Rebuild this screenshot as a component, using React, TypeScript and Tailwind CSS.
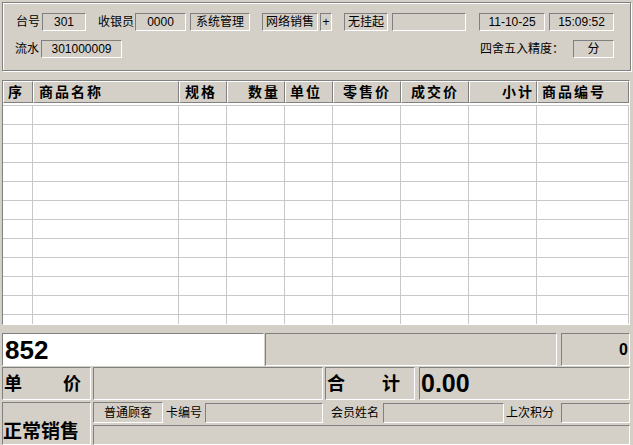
import React from 'react';

const FONT = "font-['Liberation_Sans','Noto_Sans_CJK_SC',sans-serif]";
const sunk = 'border border-t-[#808080] border-l-[#808080] border-b-white border-r-white';
const raised = 'border border-t-white border-l-white border-b-[#808080] border-r-[#808080]';

const COLUMNS = [
  { title: '序', w: 'w-[30px]', align: 'justify-start pl-[4px]' },
  { title: '商品名称', w: 'w-[146px]', align: 'justify-start pl-[5px]' },
  { title: '规格', w: 'w-[48px]', align: 'justify-start pl-[5px]' },
  { title: '数量', w: 'w-[58px]', align: 'justify-end pr-[4px]' },
  { title: '单位', w: 'w-[48px]', align: 'justify-start pl-[4px]' },
  { title: '零售价', w: 'w-[68px]', align: 'justify-center' },
  { title: '成交价', w: 'w-[68px]', align: 'justify-center' },
  { title: '小计', w: 'w-[68px]', align: 'justify-end pr-[2px]' },
  { title: '商品编号', w: 'w-[92px]', align: 'justify-start pl-[4px]' },
];

function Field({ w, children, className = '' }: { w: string; children?: React.ReactNode; className?: string }) {
  return (
    <div className={`${sunk} ${w} h-[18px] flex items-center justify-center text-[12px] leading-none ${className}`}>
      {children}
    </div>
  );
}

function Label({ w, children, className = '' }: { w: string; children: React.ReactNode; className?: string }) {
  return <div className={`${w} whitespace-nowrap text-[12px] leading-none ${className}`}>{children}</div>;
}

export default function App() {
  const rows = Array.from({ length: 12 });

  return (
    <div className={`w-[633px] h-[445px] bg-[#d4d0c8] overflow-hidden text-black ${FONT}`}>
      {/* top info panel */}
      <div className="ml-[2px] mt-[2px] w-[629px] h-[69px] border border-[#808080] shadow-[inset_1px_1px_0_#fff,1px_1px_0_#fff] pt-[10px]">
        <div className="flex items-center h-[18px]">
          <Label w="w-[24px]" className="ml-[13px]">台号</Label>
          <Field w="w-[44px]" className="ml-[2px]">301</Field>
          <Label w="w-[36px]" className="ml-[12px]">收银员</Label>
          <Field w="w-[51px]" className="ml-[1px]">0000</Field>
          <Field w="w-[60px]" className="ml-[4px]">系统管理</Field>
          <Field w="w-[56px]" className="ml-[12px]">网络销售</Field>
          <Field w="w-[12px]" className="ml-[2px]">+</Field>
          <Field w="w-[44px]" className="ml-[12px]">无挂起</Field>
          <Field w="w-[74px]" className="ml-[4px]" />
          <Field w="w-[66px]" className="ml-[13px]">11-10-25</Field>
          <Field w="w-[65px]" className="ml-[4px]">15:09:52</Field>
        </div>
        <div className="flex items-center h-[18px] mt-[9px]">
          <Label w="w-[24px]" className="ml-[12px]">流水</Label>
          <Field w="w-[81px]" className="ml-[2px]">301000009</Field>
          <Label w="w-[84px]" className="ml-[358px]">四舍五入精度：</Label>
          <Field w="w-[41px]" className="ml-[9px]">分</Field>
        </div>
      </div>

      {/* goods table */}
      <div className={`${sunk} ml-[2px] mt-[9px] w-[628px] h-[245px] overflow-hidden`}>
        <div className="flex h-[22px] bg-[#d4d0c8]">
          {COLUMNS.map((c) => (
            <div
              key={c.title}
              className={`${raised} ${c.w} h-[22px] flex items-center ${c.align} text-[14px] font-bold tracking-[2px] leading-none`}
            >
              {c.title}
            </div>
          ))}
        </div>
        <div className="bg-white h-[221px] pt-[2px] overflow-hidden">
          {rows.map((_, i) => (
            <div key={i} className="flex h-[19px] border-t border-[#c8c8c8]">
              {COLUMNS.map((c, j) => (
                <div key={j} className={`${c.w} h-full border-r border-[#c8c8c8]`} />
              ))}
            </div>
          ))}
        </div>
      </div>

      {/* input row */}
      <div className="flex mt-[8px] h-[33px]">
        <div className={`${sunk} ml-[2px] w-[262px] bg-white flex items-center pl-[2px] font-['Liberation_Sans',sans-serif] font-bold text-[26px] leading-none`}>
          852
        </div>
        <div className={`${sunk} ml-[1px] w-[292px]`} />
        <div className={`${sunk} ml-[4px] w-[69px] flex items-center justify-end pr-[1px] font-['Liberation_Sans',sans-serif] font-bold text-[16px] leading-none`}>
          0
        </div>
      </div>

      {/* price row */}
      <div className="flex mt-[1px] h-[33px]">
        <div className={`${sunk} ml-[2px] w-[89px] flex items-center justify-between px-[1px] pr-[9px] text-[18px] font-bold leading-none`}>
          <span>单</span>
          <span>价</span>
        </div>
        <div className={`${sunk} ml-[2px] w-[230px]`} />
        <div className={`${sunk} ml-[2px] w-[90px] flex items-center justify-between px-[1px] pr-[14px] text-[18px] font-bold leading-none`}>
          <span>合</span>
          <span>计</span>
        </div>
        <div className={`${sunk} ml-[4px] w-[211px] flex items-center pl-[1px] font-['Liberation_Sans',sans-serif] font-bold text-[25px] leading-none`}>
          0.00
        </div>
      </div>

      {/* member rows */}
      <div className="flex mt-[2px]">
        <div className={`${sunk} ml-[2px] w-[89px] h-[43px] flex items-end pb-[3px] text-[19px] font-bold leading-none`}>
          正常销售
        </div>
        <div className="ml-[2px] flex flex-col">
          <div className="flex items-center h-[21px]">
            <div className={`${sunk} w-[70px] h-[21px] flex items-center justify-center text-[12px] leading-none`}>
              普通顾客
            </div>
            <Label w="w-[36px]" className="ml-[3px]">卡编号</Label>
            <div className={`${sunk} ml-[3px] w-[118px] h-[20px]`} />
            <Label w="w-[48px]" className="ml-[8px]">会员姓名</Label>
            <div className={`${sunk} ml-[4px] w-[121px] h-[20px]`} />
            <Label w="w-[50px]" className="ml-[2px]">上次积分</Label>
            <div className={`${sunk} ml-[5px] w-[69px] h-[20px]`} />
          </div>
          <div className={`${sunk} mt-[2px] w-[537px] h-[20px]`} />
        </div>
      </div>
    </div>
  );
}
